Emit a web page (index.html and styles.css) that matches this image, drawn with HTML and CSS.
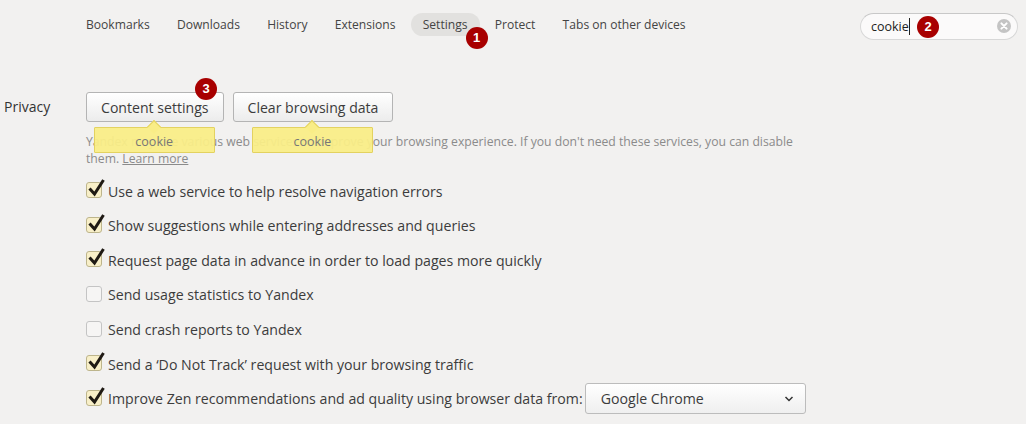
FILE: index.html
```html
<!DOCTYPE html>
<html lang="en">
<head>
  <meta charset="UTF-8">
  <title>Settings</title>
  <link rel="stylesheet" href="styles.css">
</head>
<body>
  <header class="top">
    <nav class="tabs">
      <a>Bookmarks</a>
      <a>Downloads</a>
      <a>History</a>
      <a>Extensions</a>
      <a class="active">Settings<span class="badge badge-tab">1</span></a>
      <a>Protect</a>
      <a>Tabs on other devices</a>
    </nav>
    <div class="search">
      <span class="query">cookie</span><span class="caret"></span>
      <span class="badge badge-search">2</span>
      <svg class="clear" width="14" height="14" viewBox="0 0 14 14">
        <circle cx="7" cy="7" r="7" fill="#c4c4c4"/>
        <path d="M4.4 4.4l5.2 5.2M9.6 4.4l-5.2 5.2" stroke="#fff" stroke-width="2" stroke-linecap="round"/>
      </svg>
    </div>
  </header>

  <section class="privacy">
    <h2 class="label">Privacy</h2>
    <div class="body">
      <div class="buttons">
        <button class="btn">Content settings<span class="badge badge-btn">3</span><span class="tip">cookie</span></button>
        <button class="btn">Clear browsing data<span class="tip">cookie</span></button>
      </div>
      <p class="note">Yandex may use various web services to improve your browsing experience. If you don't need these services, you can disable them. <a>Learn more</a></p>
      <ul class="opts">
        <li class="on"><i class="box"><svg class="tick" width="18" height="20" viewBox="0 0 18 20"><path d="M2.500 10.500L7.500 16 16.500 2" fill="none" stroke="#1f1a14" stroke-width="3"/></svg></i>Use a web service to help resolve navigation errors</li>
        <li class="on"><i class="box"><svg class="tick" width="18" height="20" viewBox="0 0 18 20"><path d="M2.500 10.500L7.500 16 16.500 2" fill="none" stroke="#1f1a14" stroke-width="3"/></svg></i>Show suggestions while entering addresses and queries</li>
        <li class="on"><i class="box"><svg class="tick" width="18" height="20" viewBox="0 0 18 20"><path d="M2.500 10.500L7.500 16 16.500 2" fill="none" stroke="#1f1a14" stroke-width="3"/></svg></i>Request page data in advance in order to load pages more quickly</li>
        <li><i class="box"></i>Send usage statistics to Yandex</li>
        <li><i class="box"></i>Send crash reports to Yandex</li>
        <li class="on"><i class="box"><svg class="tick" width="18" height="20" viewBox="0 0 18 20"><path d="M2.500 10.500L7.500 16 16.500 2" fill="none" stroke="#1f1a14" stroke-width="3"/></svg></i>Send a ‘Do Not Track’ request with your browsing traffic</li>
        <li class="on"><i class="box"><svg class="tick" width="18" height="20" viewBox="0 0 18 20"><path d="M2.500 10.500L7.500 16 16.500 2" fill="none" stroke="#1f1a14" stroke-width="3"/></svg></i>Improve Zen recommendations and ad quality using browser data from:
          <div class="select">Google Chrome
            <svg width="10" height="6" viewBox="0 0 10 6"><path d="M1.500 1l3.500 3.500L8.500 1" fill="none" stroke="#333" stroke-width="1.500"/></svg>
          </div>
        </li>
      </ul>
    </div>
  </section>
</body>
</html>
```

FILE: styles.css
```css
html, body {margin: 0; height: 424px; overflow: hidden;}
body {background: #f2f1f0; color: #3c3c3c; font: 14px/20px "Open Sans", sans-serif;}

.top {display: flex; justify-content: space-between; padding: 13px 8px 0 74px;}
.tabs {display: flex; gap: 3.200px;}
.tabs a {position: relative; height: 23px; padding: 0 12px; line-height: 23px; font-size: 12.100px; color: #444; border-radius: 12px;}
.tabs a.active {background: #e2e1df;}

.badge {position: absolute; width: 22px; height: 22px; border-radius: 50%; background: #a80000; color: #fff; font: bold 13px/22px "Liberation Sans", sans-serif; text-align: center;}
.badge-tab {left: 55px; top: 14px;}
.badge-search {left: 56px; top: 2px;}
.badge-btn {left: 108px; top: -15px;}

.search {position: relative; box-sizing: border-box; width: 158px; height: 27px; padding-left: 10px; display: flex; align-items: center; background: #fbfafa; border: 1px solid #d8d8d8; border-top-color: #c8c8c8; border-radius: 14px; font-size: 12.500px; color: #222;}
.caret {width: 1px; height: 17px; background: #222;}
.clear {position: absolute; right: 6px; top: 5px;}

.privacy {display: flex; margin-top: 52px;}
.label {width: 86px; padding-left: 4px; box-sizing: border-box; margin: 0; font-size: 14px; font-weight: 400; line-height: 30px; color: #333;}
.body {flex: 1;}

.buttons {display: flex; gap: 9px;}
.btn {position: relative; box-sizing: border-box; height: 30px; padding: 0 14px; border: 1px solid #b4b4b4; border-radius: 3px; background: linear-gradient(#fff, #ececec); color: #3c3c3c; font: 14.100px "Open Sans", sans-serif;}
.tip {position: absolute; left: 50%; top: 34px; width: 121px; height: 26px; margin-left: -61px; box-sizing: border-box; background: rgba(249, 237, 135, .95); border: 1px solid #e3d260; border-radius: 1px; font-size: 12.500px; line-height: 27px; color: #777;}
.tip::before {content: ""; position: absolute; left: 50%; top: -6px; width: 9px; height: 9px; margin-left: -5px; background: #f9ed87; border: solid #e3d260; border-width: 1px 0 0 1px; transform: rotate(45deg);}

.note {width: 720px; margin: 11px 0 0; font-size: 12.200px; line-height: 17px; color: #8b8b8b;}
.note a {text-decoration: underline;}

.opts {list-style: none; margin: 7.400px 0 0; padding: 0;}
.opts li {display: flex; align-items: center; height: 34.600px; font-size: 14.150px; color: #3c3c3c;}
.box {position: relative; flex: none; width: 16px; height: 16px; margin: -3px 6px 0 0; box-sizing: border-box; border: 1px solid #c4c4c4; border-radius: 3px; background: #f6f5f4;}
.on .box {background: #f8efc8; border-color: #bdb58c;}
.tick {position: absolute; left: 0; top: -5px;}

.select {display: flex; align-items: center; justify-content: space-between; box-sizing: border-box; width: 221px; height: 31px; margin: -1px 0 0 2px; padding: 0 11px 0 15px; border: 1px solid #bcbcbc; border-radius: 3px; background: linear-gradient(#fff, #efefef);}
```
